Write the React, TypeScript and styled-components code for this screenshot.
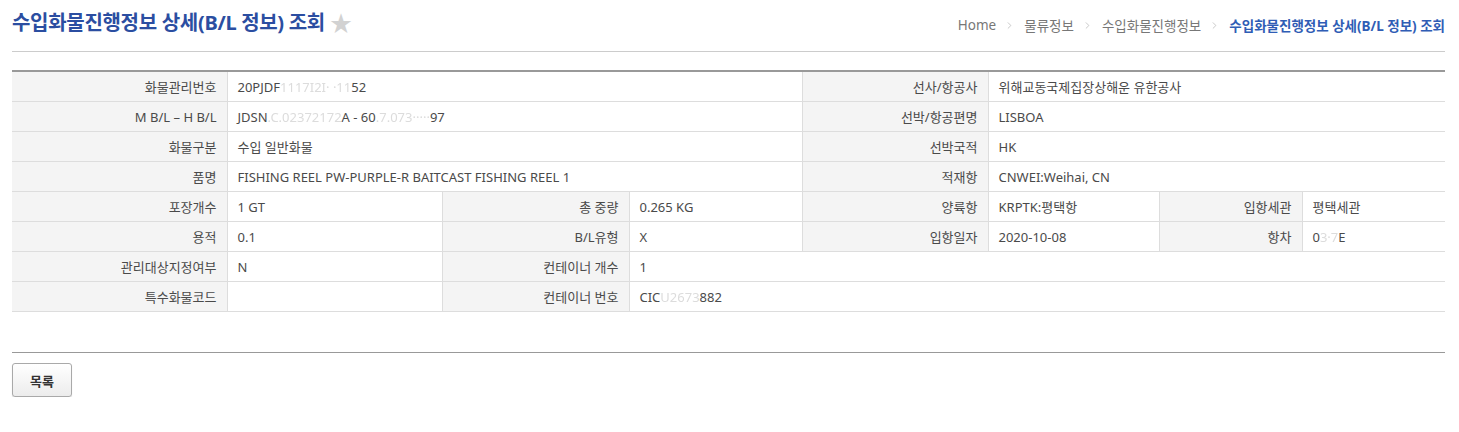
import { Fragment } from "react";
import styled, { createGlobalStyle } from "styled-components";
import { ChevronRight } from "lucide-react";

const GlobalStyle = createGlobalStyle`
  body {
    margin: 0;
    background: #ffffff;
    font-family: "Noto Sans", "Noto Sans CJK KR", sans-serif;
    color: #333333;
  }
`;

// masked characters in the source data
const Blur = styled.span`
  color: #dcdcdc;
  filter: blur(0.6px);
`;

type Cell = {
  label: string;
  value: React.ReactNode;
  span?: number;
};

const colWidths = [215, 215, 187, 173, 186, 171, 143, 143];

const rows: Cell[][] = [
  [
    { label: "화물관리번호", value: <>20PJDF<Blur>1117I2I· ·11</Blur>52</>, span: 3 },
    { label: "선사/항공사", value: "위해교동국제집장상해운 유한공사", span: 3 },
  ],
  [
    { label: "M B/L – H B/L", value: <>JDSN<Blur>.C.02372172</Blur>A - 60<Blur>.7.073·····</Blur>97</>, span: 3 },
    { label: "선박/항공편명", value: "LISBOA", span: 3 },
  ],
  [
    { label: "화물구분", value: "수입 일반화물", span: 3 },
    { label: "선박국적", value: "HK", span: 3 },
  ],
  [
    { label: "품명", value: "FISHING REEL PW-PURPLE-R BAITCAST FISHING REEL 1", span: 3 },
    { label: "적재항", value: "CNWEI:Weihai, CN", span: 3 },
  ],
  [
    { label: "포장개수", value: "1 GT" },
    { label: "총 중량", value: "0.265 KG" },
    { label: "양륙항", value: "KRPTK:평택항" },
    { label: "입항세관", value: "평택세관" },
  ],
  [
    { label: "용적", value: "0.1" },
    { label: "B/L유형", value: "X" },
    { label: "입항일자", value: "2020-10-08" },
    { label: "항차", value: <>0<Blur>3·7</Blur>E</> },
  ],
  [
    { label: "관리대상지정여부", value: "N" },
    { label: "컨테이너 개수", value: "1", span: 5 },
  ],
  [
    { label: "특수화물코드", value: "" },
    { label: "컨테이너 번호", value: <>CIC<Blur>U2673</Blur>882</>, span: 5 },
  ],
];

const crumbs = ["Home", "물류정보", "수입화물진행정보"];

export default function App() {
  return (
    <Page>
      <GlobalStyle />
      <Header>
        <Title>
          수입화물진행정보 상세(B/L 정보) 조회
          <Star>★</Star>
        </Title>
        <Breadcrumb>
          {crumbs.map((c) => (
            <Crumb key={c}>
              {c}
              <ChevronRight size={11} strokeWidth={1.5} color="#b0b0b0" />
            </Crumb>
          ))}
          <CurrentCrumb>수입화물진행정보 상세(B/L 정보) 조회</CurrentCrumb>
        </Breadcrumb>
      </Header>

      <InfoTable>
        <colgroup>
          {colWidths.map((w, i) => (
            <Col key={i} $width={w} />
          ))}
        </colgroup>
        <tbody>
          {rows.map((row, i) => (
            <tr key={i}>
              {row.map((cell) => (
                <Fragment key={cell.label}>
                  <Th>{cell.label}</Th>
                  <Td colSpan={cell.span ?? 1}>{cell.value}</Td>
                </Fragment>
              ))}
            </tr>
          ))}
        </tbody>
      </InfoTable>

      <Footer>
        <ListButton>목록</ListButton>
      </Footer>
    </Page>
  );
}

const Page = styled.div`
  padding: 0 14px 0 12px;
  font-size: 13px;
`;

const Header = styled.div`
  height: 52px;
  display: flex;
  align-items: center;
  justify-content: space-between;
  border-bottom: 1px solid #cccccc;
  padding-bottom: 8px;
  box-sizing: border-box;
`;

const Title = styled.h2`
  margin: 0;
  display: flex;
  align-items: center;
  font-size: 20px;
  font-weight: 700;
  color: #2b4ea1;
  letter-spacing: -0.3px;
`;

const Star = styled.span`
  margin-left: 5px;
  font-size: 22px;
  color: #d2d2d2;
  line-height: 1;
`;

const Breadcrumb = styled.div`
  display: flex;
  align-items: center;
  font-size: 13.5px;
  color: #777777;
  margin-top: 7px;
`;

const Crumb = styled.span`
  display: flex;
  align-items: center;
  gap: 8px;
  margin-right: 9px;
`;

const CurrentCrumb = styled.span`
  color: #2f5db5;
  font-weight: 700;
`;

const Col = styled.col<{ $width: number }>`
  width: ${(p) => p.$width}px;
`;

const InfoTable = styled.table`
  width: 100%;
  margin-top: 18px;
  border-collapse: collapse;
  table-layout: fixed;
  border-top: 2px solid #999999;
`;

const Th = styled.th`
  height: 29px;
  padding: 0 10px;
  background: #f4f4f4;
  border-bottom: 1px solid #dddddd;
  border-right: 1px solid #dddddd;
  text-align: right;
  font-weight: 400;
  color: #4a4a4a;
  white-space: nowrap;
`;

const Td = styled.td`
  height: 29px;
  padding: 0 10px;
  border-bottom: 1px solid #dddddd;
  border-right: 1px solid #dddddd;
  color: #4a4a4a;
  white-space: nowrap;

  &:last-child {
    border-right: none;
  }
`;

const Footer = styled.div`
  margin-top: 40px;
  border-top: 1px solid #999999;
  padding-top: 10px;
`;

const ListButton = styled.button`
  width: 60px;
  height: 34px;
  border: 1px solid #a9a9a9;
  border-radius: 3px;
  background: linear-gradient(#ffffff, #ececec);
  box-shadow: 0 1px 1px rgba(0, 0, 0, 0.15);
  font-family: "Noto Sans CJK KR", sans-serif;
  font-size: 13px;
  font-weight: 700;
  color: #333333;
  cursor: pointer;
`;
